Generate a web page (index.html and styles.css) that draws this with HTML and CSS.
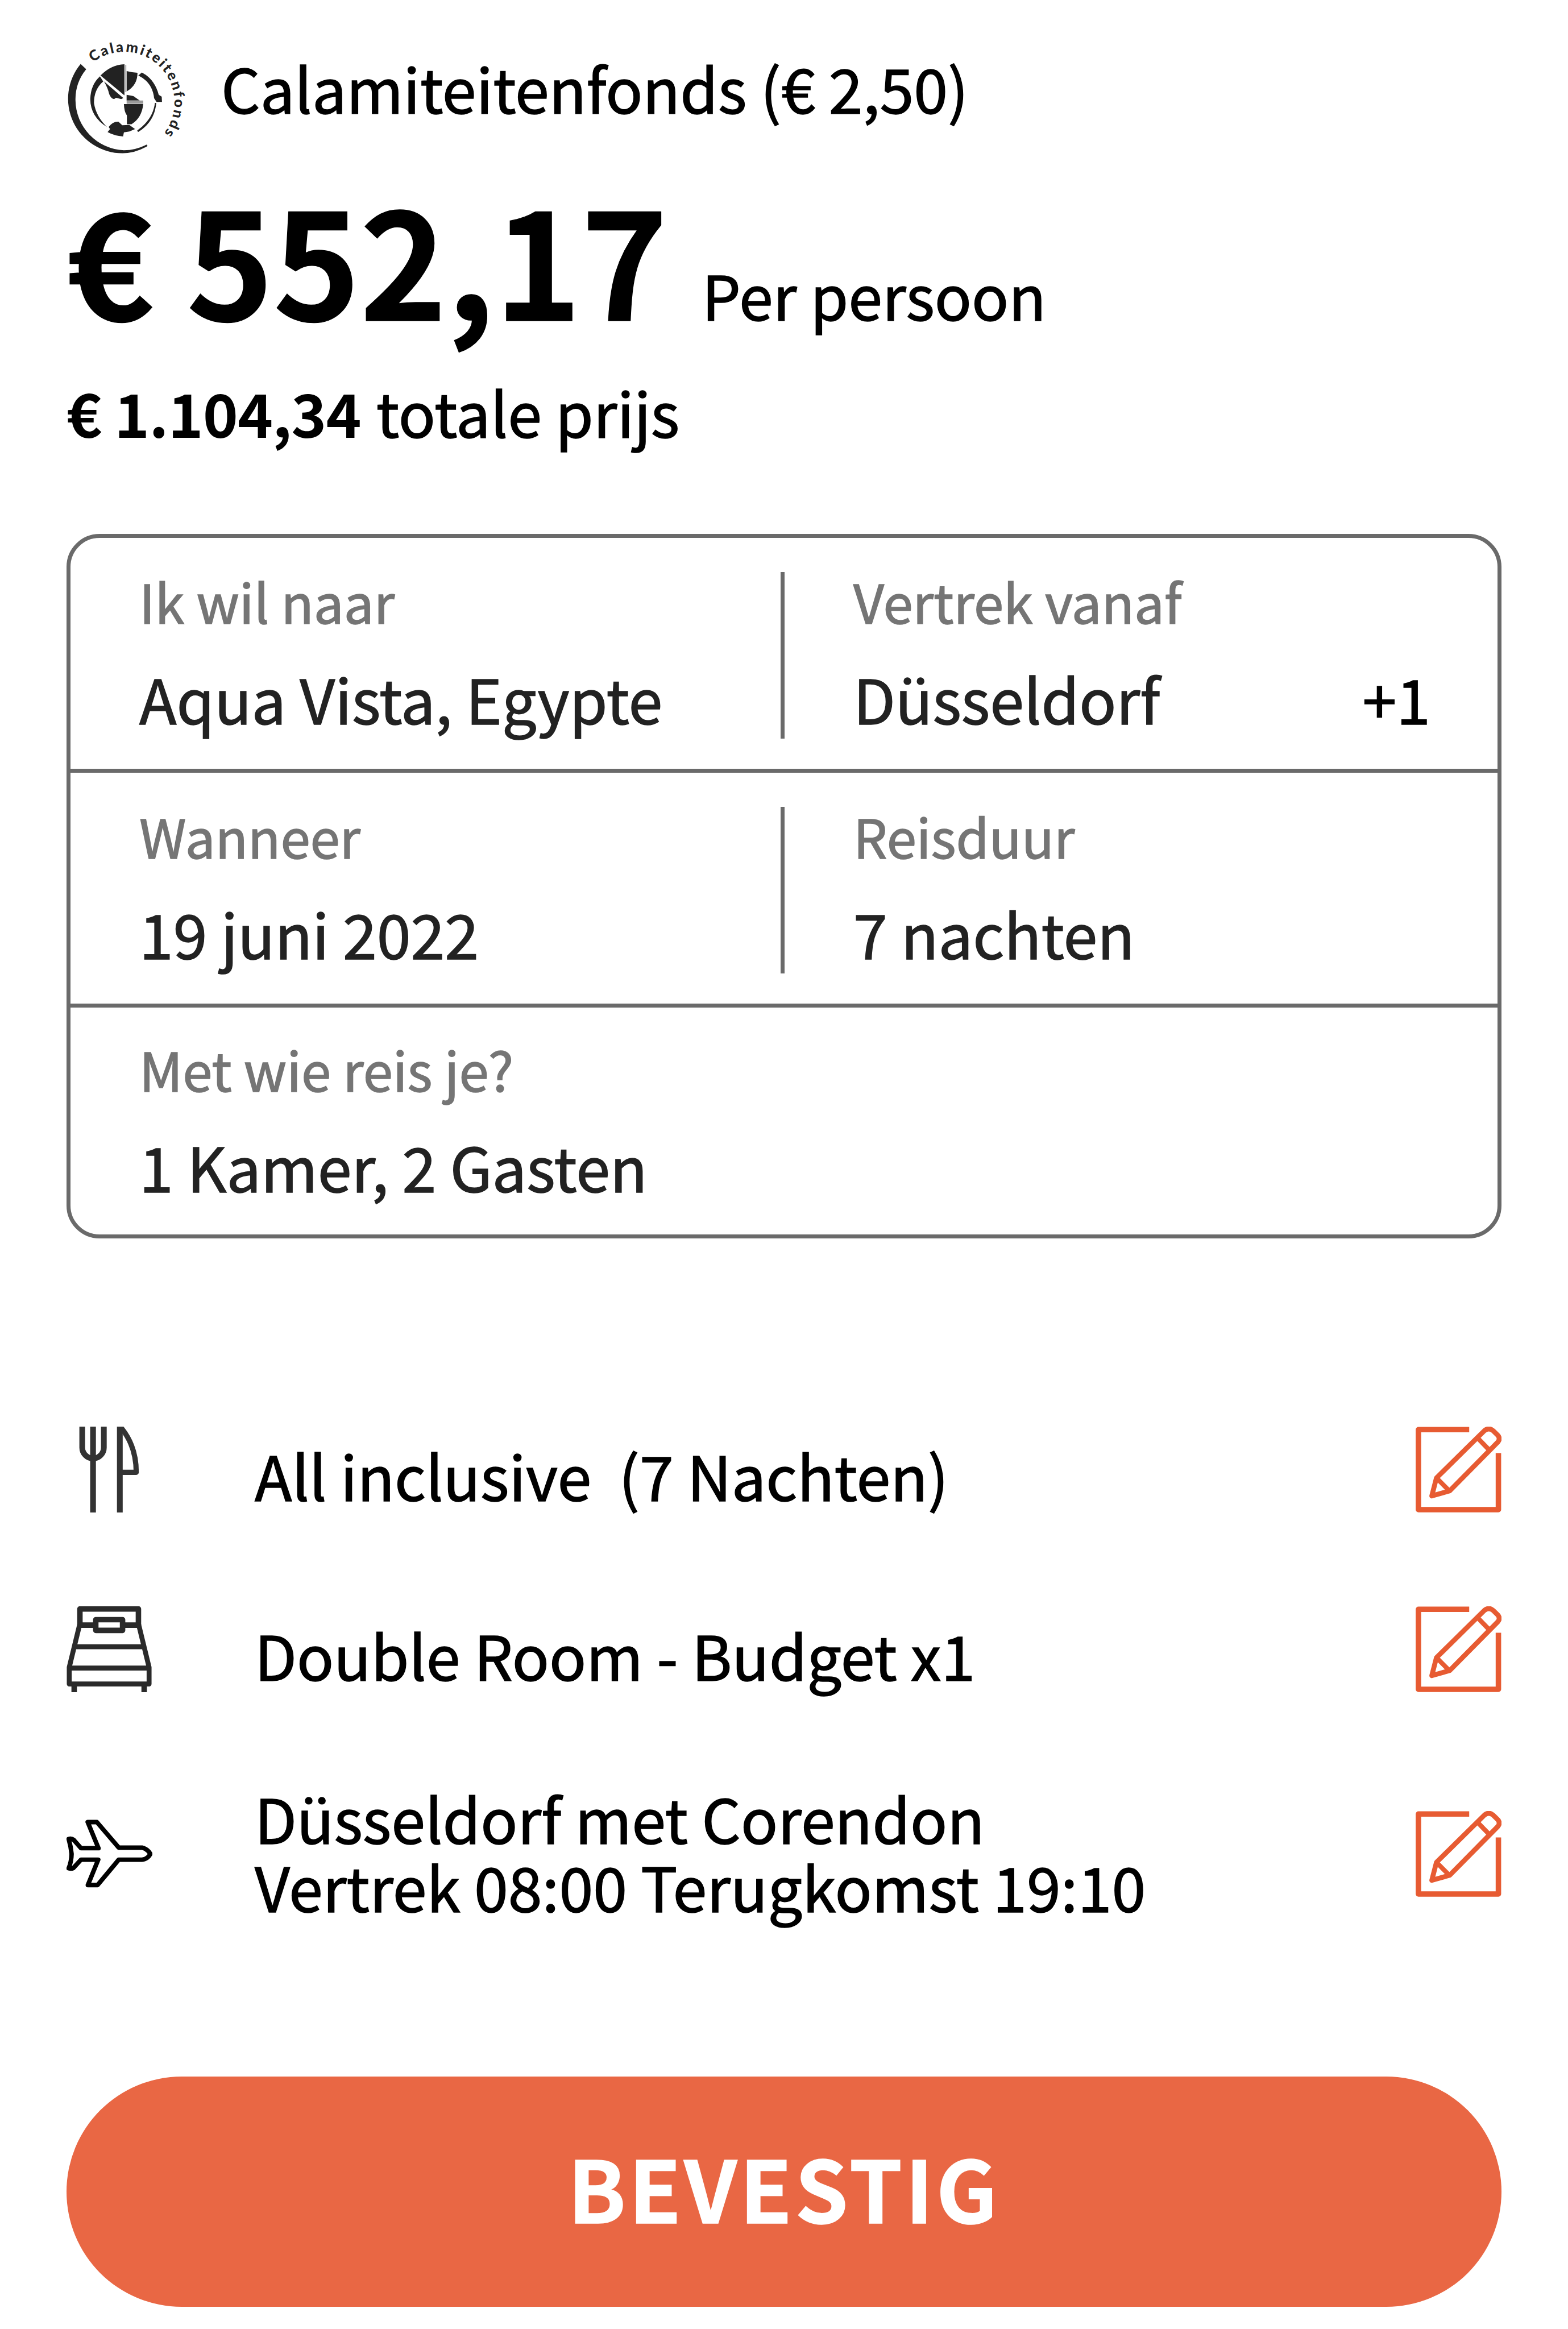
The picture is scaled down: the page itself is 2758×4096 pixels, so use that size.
FILE: index.html
```
<!DOCTYPE html>
<html lang="nl">
<head>
	<meta charset="UTF-8">
	<meta name="viewport" content="width=device-width, initial-scale=1.0">
	<title>Bevestig je reis</title>
	<link rel="stylesheet" href="styles.css">
</head>
<body>
	<!-- icons used more than once -->
	<svg class="sprite">
		<symbol id="edit" viewBox="88 104 628 629">
			<g fill="none" stroke="currentColor" stroke-width="40" stroke-linejoin="round">
				<path d="M480 126H108V712H694V298"/>
				<path stroke-width="36" d="M240 480L592 133Q625 108 654 133L690 168Q710 192 690 217L338 574L206 612Z"/>
				<path stroke-width="34" d="M244 484L334 574M544 190L626 274"/>
			</g>
		</symbol>
	</svg>

	<main class="summary">
		<div class="fund">
			<svg class="fund-logo" viewBox="69 60 876 840">
				<path id="logo-arc" fill="none" d="M262 222A372 372 0 0 1 768 763"/>
				<text class="fund-logo-text"><textPath href="#logo-arc" textLength="1072">Calamiteitenfonds</textPath></text>
				<g fill="#222">
					<path d="M172 233A401 401 0 0 0 480 890Q580 888 664 836L656 826Q580 866 490 868A372 372 0 0 1 134 500A350 350 0 0 1 213 272Z"/>
					<path d="M494 235V464L318 318Q395 238 494 235Z"/>
					<path d="M314 324L338 362Q270 420 270 520Q285 620 366 697Q243 620 243 490Q246 385 314 324Z"/>
					<path d="M344 362L486 484L470 492L432 482L418 492Q395 488 382 455Q372 410 344 362Z"/>
					<path d="M510 286L550 294L590 298Q590 390 510 435Z"/>
					<path d="M622 296Q715 345 746 460L768 474L770 512H730L712 485Q700 370 596 318Z"/>
					<path d="M510 460L560 470L606 502H510Z"/>
					<path d="M490 528H632Q622 630 546 676H512V612Q492 585 490 528Z"/>
					<path d="M378 696Q410 655 450 658L478 684L530 682L572 712L530 730L490 736L484 766Q420 762 370 734L388 712Z"/>
					<path d="M718 520H728Q716 660 594 734L588 722Q704 640 718 520Z"/>
				</g>
				<path fill="#999" d="M510 502H632V526H510Z"/>
				<path fill="none" stroke="#bbb" stroke-width="10" d="M503 240V440"/>
			</svg>
			<span class="fund-label">Calamiteitenfonds (€ 2,50)</span>
		</div>

		<div class="price">
			<strong class="price-amount">€ 552,17</strong>
			<span class="price-unit">Per persoon</span>
		</div>
		<div class="total"><strong class="total-amount">€ 1.104,34</strong> totale prijs</div>

		<div class="trip">
			<div class="trip-row">
				<div class="trip-cell">
					<div class="trip-label">Ik wil naar</div>
					<div class="trip-value">Aqua Vista, Egypte</div>
				</div>
				<div class="trip-cell">
					<div class="trip-label">Vertrek vanaf</div>
					<div class="trip-value">Düsseldorf <span class="trip-more">+1</span></div>
				</div>
			</div>
			<div class="trip-row">
				<div class="trip-cell">
					<div class="trip-label">Wanneer</div>
					<div class="trip-value">19 juni 2022</div>
				</div>
				<div class="trip-cell">
					<div class="trip-label">Reisduur</div>
					<div class="trip-value">7 nachten</div>
				</div>
			</div>
			<div class="trip-row">
				<div class="trip-cell">
					<div class="trip-label">Met wie reis je?</div>
					<div class="trip-value">1 Kamer, 2 Gasten</div>
				</div>
			</div>
		</div>

		<div class="options">
			<div class="option">
				<svg class="icon" viewBox="70 104 628 628">
					<g fill="none" stroke="#333" stroke-width="42">
						<path d="M264 104V732M185 104V258C185 300 220 337 264 337S343 300 343 258V104"/>
						<path d="M460 732V104"/>
						<path stroke-width="38" stroke-linejoin="round" d="M460 118H474Q580 250 580 438H466"/>
					</g>
				</svg>
				<div class="option-text">All inclusive&nbsp; (7 Nachten)</div>
				<svg class="icon icon-edit"><use href="#edit"/></svg>
			</div>
			<div class="option">
				<svg class="icon" viewBox="70 104 628 628">
					<g fill="none" stroke="#2a2a2a" stroke-width="40" stroke-linejoin="round">
						<path d="M168 242V123H596V242"/>
						<path d="M168 242H282M482 242H596"/>
						<path d="M284 202H480V280H284Z"/>
						<path stroke-width="36" d="M166 238L90 550V672H674V550L598 238M130 400H634M90 556H674"/>
						<path d="M126 680V732M638 680V732"/>
					</g>
				</svg>
				<div class="option-text">Double Room - Budget x1</div>
				<svg class="icon icon-edit"><use href="#edit"/></svg>
			</div>
			<div class="option">
				<svg class="icon" viewBox="68 41 628 628">
					<path fill="none" stroke="#000" stroke-width="33" stroke-linejoin="round" d="M223 122H290L450 309H620Q660 318 682 355Q660 394 620 397H450L295 583H224L300 397H174L118 458Q104 466 84 460Q104 410 105 355Q100 300 84 246Q104 240 120 252L174 313H302Z"/>
				</svg>
				<div class="option-text option-text-flight">Düsseldorf met Corendon<br>Vertrek 08:00 Terugkomst 19:10</div>
				<svg class="icon icon-edit"><use href="#edit"/></svg>
			</div>
		</div>

		<button class="confirm" type="button">BEVESTIG</button>
	</main>
</body>
</html>
```
FILE: styles.css
```
* {
	box-sizing: border-box;
}

body {
	margin: 0;
	background-color: #fff;
	color: #000;
	font-family: "Noto Sans CJK SC", "Noto Sans", sans-serif;
	font-size: 107.7px;
	line-height: 120px;
	-webkit-text-stroke: 1.5px;
}

.sprite {
	display: none;
}

.summary {
	height: 4096px;
	padding: 71px 117px 0;
}

/* price */
.fund {
	display: flex;
	align-items: flex-start;
	height: 202px;
}

.fund-logo {
	width: 210px;
	height: 201px;
	margin-right: 62px;
	overflow: visible;
	-webkit-text-stroke: 0;
}

.fund-logo-text {
	font-family: Lato, sans-serif;
	font-size: 106px;
	font-weight: 900;
	fill: #222;
}

.fund-label {
	padding-top: 22px;
	white-space: nowrap;
}

.price {
	display: flex;
	align-items: baseline;
	height: 300px;
	margin-top: 28px;
	line-height: 300px;
	white-space: nowrap;
}

.price-amount {
	font-size: 258.5px;
	font-weight: 700;
}

.price-unit {
	margin-left: 60px;
}

.total {
	margin-top: 62px;
}

.total-amount {
	margin-right: 3px;
	font-size: 105.4px;
	font-weight: 700;
	letter-spacing: -1px;
	-webkit-text-stroke: 0;
}

/* trip details */
.trip {
	height: 1239px;
	margin-top: 155px;
	border: 7px solid #6a6a6a;
	border-radius: 58px;
}

.trip-row {
	display: flex;
	height: 413px;
	padding-top: 60px;
	border-bottom: 7px solid #6a6a6a;
}

.trip-row:last-child {
	padding-top: 57px;
	border-bottom: 0;
}

.trip-cell {
	width: 1249px;
	height: 293px;
	padding-left: 121px;
	white-space: nowrap;
}

.trip-cell + .trip-cell {
	flex: 1;
	padding-right: 118px;
	border-left: 7px solid #6a6a6a;
}

.trip-label {
	color: #757575;
	font-size: 94px;
	line-height: 100px;
}

.trip-value {
	display: flex;
	justify-content: space-between;
	margin-top: 61px;
	color: #222;
}

.trip-more {
	color: #000;
}

/* options */
.options {
	margin-top: 331px;
}

.option {
	display: flex;
	align-items: center;
	height: 151px;
	margin-bottom: 165px;
}

.option:last-child {
	margin: 209px 0 0;
}

.icon {
	flex: none;
	width: 151px;
	height: 151px;
}

.icon-edit {
	margin-left: auto;
	color: #e75b32;
}

.option-text {
	margin-left: 180px;
	padding-top: 17px;
	white-space: nowrap;
}

.option-text-flight {
	padding: 0 0 10px;
}

.confirm {
	display: block;
	width: 100%;
	height: 405px;
	margin-top: 316px;
	padding: 0 0 19px;
	border: 0;
	border-radius: 203px;
	background-color: #e96744;
	color: #fff;
	font-family: inherit;
	font-size: 150px;
	font-weight: 700;
	line-height: 386px;
	letter-spacing: 5px;
}
```
